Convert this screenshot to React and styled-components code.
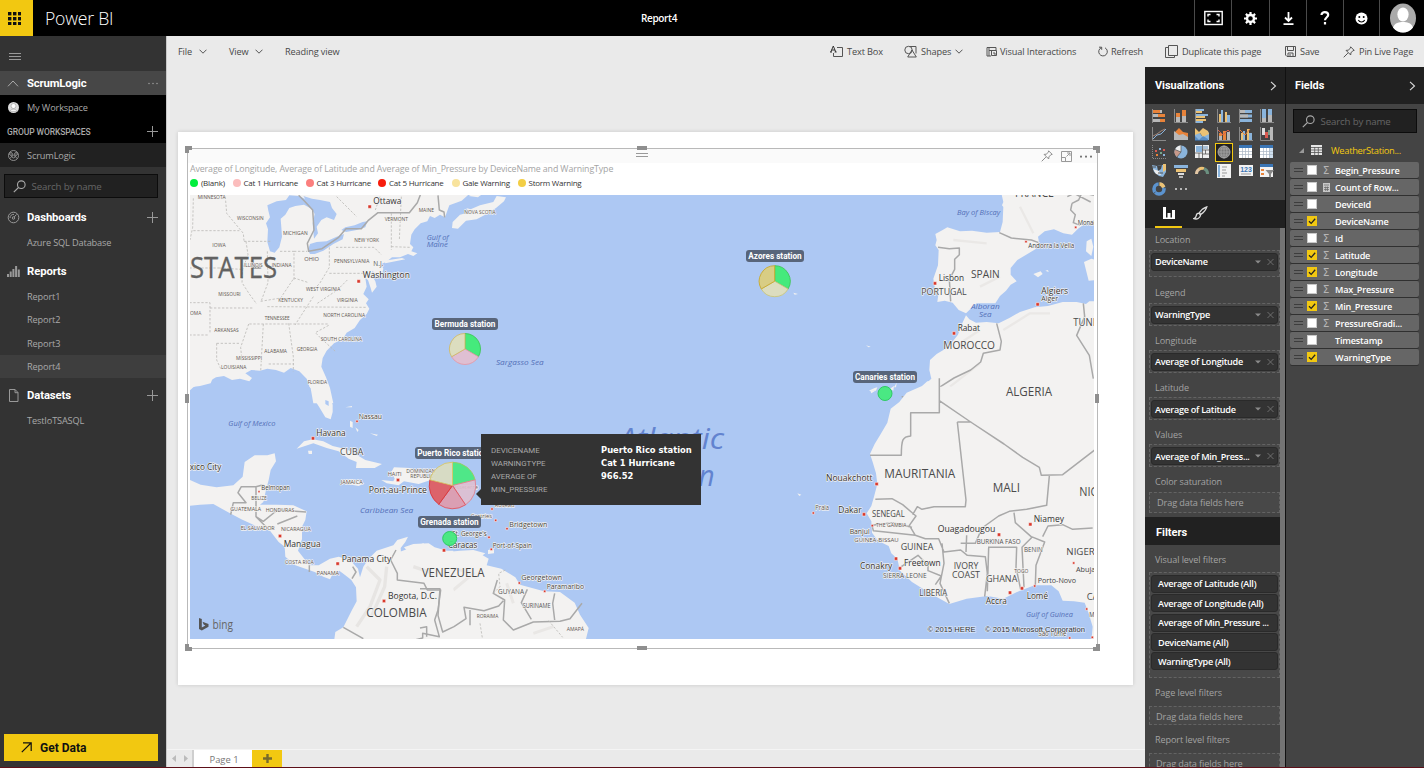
import React from 'react';
import styled, { createGlobalStyle, css } from 'styled-components';

const UI = '"Open Sans", "Noto Sans", sans-serif';
const DIN = 'Roboto, "Open Sans", sans-serif';
const YELLOW = '#f2c811';

const Global = createGlobalStyle`
  * { box-sizing: border-box; }
  body { margin: 0; background: #eaeaea; font-family: ${UI}; overflow: hidden; }
`;

/* ---------- shell ---------- */
const Shell = styled.div`
  width: 1424px; height: 768px; display: flex; flex-direction: column;
  border-bottom: 1px solid #5d1019; overflow: hidden; font-size: 9.5px;
`;
const TopBar = styled.header`
  height: 36px; flex: none; background: #000; display: flex; color: #fff;
`;
const Waffle = styled.div`
  width: 33px; background: ${YELLOW}; display: flex; align-items: center; justify-content: center;
  padding-right: 4px;
`;
const Brand = styled.div`
  width: 567px; padding-left: 12px; font-size: 17.6px; font-weight: 300; line-height: 36px; letter-spacing: -0.2px;
`;
const ReportTitle = styled.div`
  flex: 1; padding-left: 41px; font-size: 10px; line-height: 36px; font-weight: 600; letter-spacing: -0.35px;
`;
const TopButton = styled.div`
  width: ${p => p.$w}px; border-left: 1px solid #4a4a4a; display: flex; align-items: center; justify-content: center;
`;
const Body = styled.div`flex: 1; display: flex; min-height: 0;`;

/* ---------- sidebar ---------- */
const Sidebar = styled.nav`
  width: 166px; background: #333; display: flex; flex-direction: column; flex: none;
`;
const Menu = styled.div`height: 35px; padding: 16px 0 0 9px; svg { display: block; }`;
const SideRow = styled.div`
  height: ${p => p.$h}px; margin-top: ${p => p.$mt || 0}px; background: ${p => p.$bg || 'transparent'};
  display: flex; align-items: center; padding: 0 8px 0 7px; flex: none;
`;
const IconSlot = styled.span`width: 20px; display: flex; align-items: center; svg { display: block; }`;
const SideHead = styled.span`
  flex: 1; color: #fff; font: 700 11.3px ${DIN}; letter-spacing: ${p => p.$ls || 0}px;
`;
const SideText = styled.span`
  flex: 1; color: #a9a9a9; font-size: 9.2px; letter-spacing: -0.14px; white-space: nowrap;
`;
const Caption = styled.span`flex: 1; color: #a9a9a9; font: 500 8.5px ${DIN}; letter-spacing: -0.1px; padding-top: 1px;`;
const SearchBox = styled.div`
  height: 24px; margin: ${p => p.$m}; background: #212121; border: 1px solid #0c0c0c;
  display: flex; align-items: center; gap: 5.5px; padding-left: 8px; color: #666; font-size: 9.7px; letter-spacing: -0.15px; flex: none;
`;
const GetData = styled.div`
  margin: auto 8px 6px 4px; height: 27px; background: ${YELLOW}; color: #111; display: flex; align-items: center;
  gap: 8px; padding-left: 17px; font: 700 12px ${DIN};
`;

/* ---------- editor ---------- */
const Editor = styled.main`
  flex: 1; display: flex; flex-direction: column; border-left: 1px solid #c8c8c8; background: #eaeaea; min-width: 0;
`;
const ToolBar = styled.div`height: 31px; flex: none; display: flex; padding-left: 11px;`;
const ToolItem = styled.div`
  width: ${p => p.$w}px; display: flex; align-items: center; gap: ${p => p.$gap || 4}px; color: #484848;
  font-size: 9.2px; letter-spacing: -0.13px; white-space: nowrap; svg { flex: none; }
`;
const Spacer = styled.div`flex: 1;`;
const Work = styled.div`flex: 1; display: flex; min-height: 0;`;
const CanvasColumn = styled.div`width: 978px; display: flex; flex-direction: column; flex: none;`;
const Page = styled.section`
  margin: 65px 12px 0 11px; height: 553px; background: #fff; box-shadow: 0 0 4px rgba(0,0,0,.15); padding: 16px 35px 0 9px;
  flex: none;
`;
const Visual = styled.div`
  height: 501px; border: 1px solid #b9b9b9; position: relative; padding: 0 0 0 2px;
`;
const Handle = styled.i`
  position: absolute; background: ${p => (p.$corner ? 'transparent' : '#8f8f8f')};
  ${p => p.$css}
`;
const VisualHeader = styled.div`
  height: 14px; margin-left: -2px; background: #fafafa; display: flex; align-items: center; justify-content: flex-end; gap: 8px;
  padding-right: 5px; position: relative;
`;
const Grip = styled.i`
  position: absolute; left: 448px; top: 4px; width: 12px; height: 4px; border: solid #999; border-width: 1px 0;
`;
const VisualTitle = styled.div`
  height: 14px; line-height: 13px; color: #a4a4a4; font-size: 8.8px; letter-spacing: -0.1px; white-space: nowrap;
`;
const Legend = styled.div`height: 18px; display: flex; align-items: flex-start; line-height: 11px;`;
const LegendItem = styled.div`
  width: ${p => p.$w}px; display: flex; align-items: center; gap: 3px; color: #333; font-size: 8px; letter-spacing: -0.24px;
  white-space: nowrap;
  &::before { content: ''; width: 8px; height: 8px; border-radius: 50%; background: ${p => p.$c}; flex: none; }
`;
const MapFrame = styled.div`
  width: 904px; height: 444px; position: relative; overflow: hidden; > svg { display: block; }
`;
const Badge = styled.div`
  position: absolute; left: ${p => p.$x}px; top: ${p => p.$y}px; width: ${p => p.$w}px; height: 12px; border-radius: 3px;
  background: #58657a; color: #fff; font: 700 8.2px/12px ${DIN}; text-align: center; white-space: nowrap;
`;
const Tooltip = styled.div`
  position: absolute; left: 291px; top: 239px; width: 220px; height: 71px; background: #333; color: #a8a8a8;
  display: grid; grid-template-columns: 110px 1fr; padding: 10px 0 0 10px; grid-auto-rows: 13.2px; align-content: start;
  font: 400 7.9px/13px ${DIN};
  &::before {
    content: ''; position: absolute; left: -5px; top: 55px; border: 5px solid transparent; border-left: 0; border-right-color: #333;
  }
`;
const TipValue = styled.b`color: #fff; font: 700 8.4px/13px "DejaVu Sans", ${UI}; white-space: nowrap;`;

const PageTabs = styled.div`
  height: 18px; margin-top: auto; border-top: 1px solid #f4f4f4; display: flex; color: #777;
`;
const TabArrows = styled.div`width: 27px; border-right: 2px solid #cfcfcf; display: flex; align-items: center; justify-content: center; gap: 8px;`;
const PageTab = styled.div`width: 58px; background: #fff; text-align: center; font-size: 9.4px; line-height: 19px; padding-left: 2px;`;
const AddPage = styled.div`width: 30px; background: ${YELLOW}; display: flex; align-items: center; justify-content: center;`;

/* ---------- right panes ---------- */
const Pane = styled.aside`
  background: #444; display: flex; flex-direction: column; width: ${p => p.$w}px; overflow: hidden; flex: none;
  ${p => p.$sep && css`border-right: 1px solid #111;`}
`;
const PaneHead = styled.div`
  height: 37px; background: #212121; color: #fff; display: flex; align-items: center; justify-content: space-between;
  padding: 0 8px 0 ${p => p.$pl || 9}px; font: 700 10.9px ${DIN}; flex: none;
`;
const Gallery = styled.div`
  height: 96px; display: grid; grid-template-columns: repeat(6, 21.7px); grid-auto-rows: 18.4px; padding: 2.400px 0 0 3.200px; flex: none;
`;
const Cell = styled.div`
  display: flex; align-items: center; justify-content: center; outline: ${p => (p.$on ? `1.5px solid ${YELLOW}` : 'none')};
  outline-offset: -1px; background: ${p => (p.$on ? '#222' : 'none')}; margin: ${p => (p.$on ? '0 2px' : '0')};
`;
const Tabs = styled.div`
  height: 28px; background: #212121; display: flex; padding-left: 10px; flex: none;
`;
const Tab = styled.div`
  width: 27px; margin-right: 5px; display: flex; align-items: center; justify-content: center;
  border-bottom: 2px solid ${p => (p.$on ? YELLOW : 'transparent')};
`;
const Wells = styled.div`
  flex: 1; border-right: 5px solid #747474; padding-left: 4px; min-height: 0; overflow: hidden; background: #444;
`;
const WellLabel = styled.div`
  height: ${p => p.$h}px; padding: ${p => p.$pt}px 0 0 6px; color: #a3a3a3; font-size: 9.1px; letter-spacing: -0.1px; line-height: 12px; white-space: nowrap;
`;
const Well = styled.div`
  height: ${p => p.$h}px; border: 1px dashed #636363; background: #484848; padding: 2px 1px 0 1px; display: flex;
  flex-direction: column; gap: 1.4px;
`;
const Chip = styled.div`
  height: 18px; flex: none; background: #333; border: 1px solid #2a2a2a; border-radius: 3px; color: #fff; display: flex;
  align-items: center; padding: 0 3px 0 ${p => p.$pl || 3}px; font-size: 9.1px; font-weight: 600; letter-spacing: -0.27px; white-space: nowrap;
  span { flex: 1; } svg { flex: none; }
`;
const Drop = styled.div`color: #a3a3a3; font-size: 9.2px; letter-spacing: -0.13px; line-height: 15px; padding-left: ${p => p.$pl}px; white-space: nowrap;`;
const FilterHead = styled.div`
  height: 28px; margin: 4px -5px 0 -4px; background: #212121; border-right: 5px solid #636363; color: #fff; font: 700 11px/31px ${DIN};
  padding-left: 11px;
`;
const TableRow = styled.div`
  height: 16px; margin-top: 9px; display: flex; align-items: center; color: #f2c811; padding-left: 13px; font-size: 9.4px; letter-spacing: -0.33px;
  svg:nth-child(2) { margin: 0 9px 0 7px; }
`;
const FieldList = styled.div`display: flex; flex-direction: column; gap: 1px; padding: 4px 5px 0 4px;`;
const FieldRow = styled.div`
  height: 16px; background: #666; border-radius: 2px; box-shadow: 0 1px 0 #303030; display: flex; align-items: center; color: #fff; padding-left: 4px;
  font-size: 9.1px; font-weight: 600; letter-spacing: -0.18px;
`;
const DragGrip = styled.i`width: 9px; height: 4px; border: solid #3d3d3d; border-width: 1px 0; margin-right: 4px;`;
const Check = styled.i`
  width: 10px; height: 10px; background: ${p => (p.$on ? YELLOW : '#fff')}; border: 1px solid ${p => (p.$on ? YELLOW : '#c9c9c9')}; display: flex;
`;
const Kind = styled.i`width: 18px; display: flex; justify-content: center; color: #b5b5b5; font: 400 10.5px "DejaVu Sans", sans-serif;`;

/* ---------- icons ---------- */
const Svg = ({ w = 12, h = w, vb = `0 0 ${w} ${h}`, s = 'none', f = 'none', sw = 1, children }) => (
  <svg width={w} height={h} viewBox={vb} fill={f} stroke={s} strokeWidth={sw}>{children}</svg>
);
const Chevron = () => <Svg w={8} h={5} s="#555"><path d="M.5 .7 4 4.2 7.5 .7" /></Svg>;
const ChevRight = () => <Svg w={7} h={10} s="#ddd" sw={1.1}><path d="M1 .8 5.5 5 1 9.2" /></Svg>;
const Plus = () => <Svg w={11} s="#999"><path d="M5.5 0v11M0 5.5h11" /></Svg>;
const Magnifier = () => (
  <Svg w={13} s="#aaa" sw={1.1}><circle cx="8.3" cy="4.7" r="3.8" /><path d="M5.5 7.5.8 12.2" /></Svg>
);
const Pin = ({ c = '#555', w = 12 }) => (
  <Svg w={w} vb="0 0 12 12" s={c} sw={1}><path d="M7.6.8l3.6 3.6-1.3.3-2 2.2-.2 2.100-4.600-4.600 2.100-.2 2.200-2zM4.900 7.100.7 11.300" /></Svg>
);
const O = '#e8833a', B = '#8ab4dc', Y = '#ecc274', G = '#b9b9b9', DB = '#3a75b5', AX = '#8a8a8a';
const R = (x, y, w, h, c) => <rect x={x} y={y} width={w} height={h} fill={c} key={`${x}-${y}-${w}-${h}-${c}`} stroke="none" />;
const Viz = ({ children }) => <Svg w={14}>{children}</Svg>;
const axisV = <path d="M.5 0v14" stroke={AX} />;
const axisL = <path d="M.5 0v13.5H14" stroke={AX} />;
const tableIcon = (last) => (
  <>{R(0, 0, 13, 13, '#fff')}{R(0, 0, 13, 3, DB)}{last ? R(9, 3, 4, 10, '#cfe0ef') : null}
    <path d="M3.5 3v10M6.5 3v10M9.5 3v10M0 6.500h13M0 9.500h13" stroke="#a9b6c4" strokeWidth=".7" /></>
);
const VIZ = [
  <>{axisV}{R(1, 1, 7, 3, O)}{R(8, 1, 2, 3, G)}{R(1, 5, 5, 3, G)}{R(6, 5, 7, 3, O)}{R(1, 10, 7, 3, G)}{R(8, 10, 5, 3, O)}</>,
  <>{axisL}{R(2, 8, 4, 5, G)}{R(2, 4, 4, 4, O)}{R(8, 7, 4, 6, G)}{R(8, 1, 4, 6, O)}</>,
  <>{axisV}{R(1, 0, 8, 2, B)}{R(1, 2, 6, 2, Y)}{R(1, 5, 12, 2, B)}{R(1, 7, 9, 2, Y)}{R(1, 10, 10, 2, Y)}{R(1, 12, 7, 2, B)}</>,
  <>{axisL}{R(2, 5, 2, 8, Y)}{R(4, 1, 2, 12, B)}{R(8, 3, 2, 10, Y)}{R(10, 6, 3, 7, B)}</>,
  <>{axisV}{R(1, 1, 12, 3, B)}{R(1, 1, 5, 3, G)}{R(1, 5.500, 12, 3, B)}{R(1, 5.500, 8, 3, G)}{R(1, 10, 12, 3, B)}</>,
  <>{axisL}{R(2, 0, 4, 9, B)}{R(2, 9, 4, 4, G)}{R(8, 0, 4, 6, B)}{R(8, 6, 4, 7, G)}</>,
  <>{axisL}<path d="M1 12 5 8l4-1 5-5" stroke={B} /><path d="M1 9l4-2 4-3 4-2" stroke="#a3867a" /></>,
  <><path d="M0 13V6l5-5 4 4 5 1v7z" fill={O} /><path d="M0 13V4l5 4 4-1 5 3v3z" fill={G} /></>,
  <><path d="M0 13V7l4-2 3 4 5-5 2 2v7z" fill={B} /><path d="M0 1l4 4 4-4 5 3 1 3-6 3-3-4-5 2z" fill={Y} /><path d="M0 9l4 4 4-4 5 3v2H0z" fill={DB} opacity=".6" /></>,
  <>{axisL}{R(2, 6, 3, 7, G)}{R(6, 4, 3, 9, O)}{R(10, 5, 3, 8, G)}{R(2, 6, 3, 3, O)}<path d="M1 3l5 5 5-5 2 2" stroke="#d2604a" /></>,
  <>{axisL}{R(2, 6, 2, 7, Y)}{R(4, 4, 2, 9, B)}{R(8, 2, 2, 11, Y)}{R(10, 6, 3, 7, B)}<path d="M1 3l5 5 5-6" stroke={O} /></>,
  <>{axisL}{R(2, 1, 3, 7, '#ddd')}{R(5, 5, 3, 6, '#d8594f')}{R(8, 3, 2, 5, '#7a9c8a')}{R(10, 0, 3, 13, '#b9b9b9')}</>,
  <><path d="M.5 0v13.5H14" stroke={AX} strokeDasharray="1 1" />{R(3, 5, 2, 2, '#d8594f')}{R(7, 3, 2, 2, B)}{R(8, 7, 2, 2, '#76a68b')}{R(4, 9, 2, 2, O)}{R(11, 9, 2, 2, B)}{R(11, 4, 2, 2, '#d8594f')}</>,
  <><circle cx="7" cy="7" r="6.500" fill={B} /><path d="M7 7V.5A6.500 6.500 0 0 0 1 5z" fill="#eee" /><path d="M7 7 1 4.500A6.500 6.500 0 0 0 3 12z" fill="#c7998a" /><path d="M7 7V.5M7 7 1 4.500M7 7l-4 5" stroke="#555" strokeWidth=".7" /></>,
  <>{R(0, 0, 14, 13, '#eee')}{R(1, 1, 6, 6, B)}{R(8, 1, 5, 3, '#a9bfd4')}<path d="M7.500 0v13M0 8h7M7 5h7M10.500 5v4M7 9h7M4 8v5" stroke="#555" strokeWidth=".8" /></>,
  <><circle cx="7" cy="7" r="6" fill="#777" stroke="#a5a5a5" /><ellipse cx="7" cy="7" rx="3" ry="6" stroke="#aaa" strokeWidth=".7" /><path d="M1 7h12M7 1v12M2 4h10M2 10h10" stroke="#aaa" strokeWidth=".7" /></>,
  tableIcon(false),
  tableIcon(true),
  <><path d="M0 1l5 1 4-1 5 0v7l-3 5-4-1-5-4z" fill={B} /><path d="M5 2l5-1-1 4-3 2z" fill="#444" /><path d="M11 0l3 0v6l-3 2z" fill={Y} /><path d="M1 5l6 2 2 4-5-1z" fill="#eee" /><path d="M0 3h4M6 9h5" stroke="#555" /></>,
  <>{R(0, 1, 14, 3, B)}{R(2, 5, 10, 3, Y)}{R(4, 9, 6, 2, '#ddd')}{R(5, 12, 4, 2, G)}</>,
  <><path d="M1.500 10a5.500 5.500 0 0 1 3-5" stroke="#e2c7a5" strokeWidth="3" /><path d="M4 5.200a5.500 5.500 0 0 1 5-.6" stroke={Y} strokeWidth="3" /><path d="M9 4.600a5.500 5.500 0 0 1 3.500 5.400" stroke="#6b9080" strokeWidth="3" /></>,
  <>{R(0, 0, 14, 14, '#f2f2f2')}{R(1, 1, 2, 12, B)}<path d="M5 3h5M5 6h4M5 9h5M5 12h3" stroke="#999" /></>,
  <>{R(0, 1, 14, 11, '#f2f2f2')}<text x="7" y="7.500" fontSize="7" fontWeight="700" fontFamily="Liberation Sans" textAnchor="middle" fill={DB}>123</text><path d="M2 10h10" stroke="#999" /></>,
  <>{R(0, 0, 13, 13, '#f2f2f2')}{R(0, 0, 13, 3, DB)}{R(1, 5, 3, 2, O)}{R(1, 9, 3, 2, O)}<path d="M5.500 6H14l-3 4v4l-2-1.500V10z" fill="#888" /></>,
  <><circle cx="7" cy="7" r="5" stroke="#5b93cf" strokeWidth="3.600" /><path d="M7 2a5 5 0 0 1 4.700 3.300" stroke={Y} strokeWidth="3.600" /><path d="M7 0v4M12 6l2-1M3.500 10 1 12" stroke="#444" strokeWidth=".8" /></>,
  <><circle cx="2" cy="7" r="1" fill="#ddd" /><circle cx="7" cy="7" r="1" fill="#ddd" /><circle cx="12" cy="7" r="1" fill="#ddd" /></>,
];

/* ---------- map ---------- */
const LAND = '#f3f2f1';
const WATER = '#adc8f3';

const Pie = ({ cx, cy, r, slices }) => {
  let a = 0;
  const pt = d => `${cx + r * Math.sin((d * Math.PI) / 180)} ${cy - r * Math.cos((d * Math.PI) / 180)}`;
  return slices.map(([deg, fill, stroke]) => {
    const d = `M${cx} ${cy}L${pt(a)}A${r} ${r} 0 0 1 ${pt(a + deg)}Z`;
    a += deg;
    return <path key={a} d={d} fill={fill} stroke={stroke} strokeWidth=".9" />;
  });
};

const KIND = {
  state: { fontSize: 18, fill: '#5f5650' },
  small: { fontSize: 20, fill: '#555' },
  country: { fontSize: 26, fill: '#4a4a4a' },
  large: { fontSize: 31, fill: '#4a4a4a' },
  nation: { fontSize: 36, fill: '#4a4a4a' },
  town: { fontSize: 22, fill: '#444' },
  city: { fontSize: 26.5, fill: '#333' },
  sea: { fontSize: 22, fill: '#5470b8', fontStyle: 'italic', stroke: 'none' },
};
/* Each region is laid out on a grid three times finer than the screen. */
const Grid3 = ({ at: [x, y], children }) => (
  <g transform={`translate(${x} ${y}) scale(.33333)`} strokeLinejoin="round">{children}</g>
);
const Labels = ({ at, labels, dots }) => (
  <Grid3 at={at}>
    {dots.map(([dx, dy, s = 10]) => <rect key={`${dx}-${dy}`} x={dx - s / 2} y={dy - s / 2} width={s} height={s} fill="#d8392c" stroke="#fff" strokeWidth="1.500" />)}
    <g stroke={LAND} strokeWidth="4" paintOrder="stroke" fontFamily={'"Open Sans", "Noto Sans", sans-serif'}>
      {labels.map(([t, k, lx, ly, len]) => (
        <text key={t + lx} x={lx} y={ly} textLength={len} lengthAdjust="spacingAndGlyphs" {...KIND[k]}>{t}</text>
      ))}
    </g>
  </Grid3>
);
const border = { fill: 'none', stroke: '#a9a9a9', strokeWidth: 4.500 };
const dashed = { fill: 'none', stroke: '#bcbab7', strokeWidth: 2.500, strokeDasharray: '7 5' };

const ORIGIN = { north: [180, 140], carib: [180, 380], south: [420, 380], europe: [720, 140], africa: [790, 380] };
const LABELS = {
  north: [
    ['MINNESOTA', 'state', 53, 176, 84], ['WISCONSIN', 'state', 171, 239, 80], ['MICHIGAN', 'state', 309, 284, 74],
    ['Ottawa', 'city', 580, 192, 84], ['MAINE', 'state', 716, 217, 46], ['VERMONT', 'state', 614, 243, 70],
    ['NOVA SCOTIA', 'state', 853, 221, 94], ['IOWA', 'state', 97, 320, 40], ['NEW YORK', 'state', 523, 306, 74],
    ['OHIO', 'state', 373, 364, 44], ['ILLINOIS', 'state', 192, 382, 56], ['INDIANA', 'state', 275, 382, 60],
    ['PENNSYLVANIA', 'state', 462, 369, 106], ['N.J.', 'small', 580, 379, 30], ['Washington', 'city', 548, 415, 142],
    ['WEST VIRGINIA', 'state', 378, 454, 103], ['KENTUCKY', 'state', 295, 486, 74], ['VIRGINIA', 'state', 471, 485, 62],
    ['MISSOURI', 'state', 115, 467, 67], ['OMA', 'state', 30, 526, 34], ['TENNESSEE', 'state', 254, 539, 75],
    ['NORTH CAROLINA', 'state', 430, 530, 125], ['ARKANSAS', 'state', 103, 575, 73], ['SOUTH CAROLINA', 'state', 422, 602, 124],
    ['ALABAMA', 'state', 253, 638, 68], ['GEORGIA', 'state', 350, 634, 62], ['MISSISSIPPI', 'state', 168, 660, 78],
    ['LOUISIANA', 'state', 123, 687, 76], ['FLORIDA', 'state', 383, 731, 58],
    ['Gulf of', 'sea', 740, 299, 66], ['Maine', 'sea', 740, 320, 64], ['Sargasso Sea', 'sea', 948, 675, 143],
  ],
  carib: [
    ['Gulf of Mexico', 'sea', 145, 138, 141], ['Nassau', 'town', 536, 118, 70], ['Havana', 'city', 409, 169, 88],
    ['CUBA', 'country', 480, 226, 70], ['xico City', 'city', 29, 269, 95], ['Belmopan', 'town', 244, 329, 86],
    ['BELIZE', 'state', 214, 360, 46], ['GUATEMALA', 'state', 151, 392, 92], ['HONDURAS', 'state', 257, 396, 86],
    ['EL SALVADOR', 'state', 182, 449, 102], ['NICARAGUA', 'state', 303, 454, 90], ['Managua', 'city', 311, 500, 111],
    ['COSTA RICA', 'state', 315, 552, 86], ['PANAMA', 'state', 410, 584, 67], ['Panama City', 'city', 485, 546, 149],
    ['Bogota, D.C.', 'city', 624, 657, 147], ['COLOMBIA', 'nation', 559, 711, 181], ['JAMAICA', 'state', 482, 311, 66],
    ['HAITI', 'state', 623, 288, 42], ['DOMINICAN', 'state', 679, 279, 88], ['REPUBLIC', 'state', 691, 295, 70], ['Port-au-Prince', 'city', 566, 339, 175],
    ['Caribbean Sea', 'sea', 540, 398, 160],
  ],
  south: [
    ['Basseterre', 'state', 88, 328, 86], ['Roseau', 'state', 224, 381, 60], ['Castries', 'state', 152, 413, 64],
    ['Bridgetown', 'town', 268, 440, 114], ["St. George's", 'town', 96, 467, 104], ['Caracas', 'city', 84, 505, 88],
    ['Port-of-Spain', 'town', 218, 503, 118], ['VENEZUELA', 'nation', 5, 590, 189], ['Georgetown', 'town', 304, 601, 122],
    ['Paramaribo', 'town', 380, 628, 112], ['GUYANA', 'small', 234, 641, 78], ['SURINAME', 'small', 308, 684, 84],
    ['RORAIMA', 'state', 170, 713, 65], ['AMAPÁ', 'state', 440, 753, 52],
  ],
  europe: [
    ['FRANCE', 'nation', 885, 172, 117], ['Bay of Biscay', 'sea', 711, 226, 130], ['Monaco', 'town', 1073, 255, 66],
    ['Andorra la Vella', 'town', 925, 325, 138], ['SPAIN', 'large', 753, 413, 86], ['Lisbon', 'city', 656, 424, 76],
    ['PORTUGAL', 'country', 604, 464, 136], ['Alboran', 'sea', 753, 506, 86], ['Sea', 'sea', 777, 532, 38],
    ['Algiers', 'city', 964, 461, 80], ['Alger', 'town', 964, 482, 50], ['Rabat', 'city', 713, 572, 67],
    ['TUNISIA', 'large', 1060, 557, 108], ['MOROCCO', 'large', 670, 628, 155], ['ALGERIA', 'nation', 858, 768, 138],
  ],
  africa: [
    ['Nouakchott', 'city', 108, 304, 140], ['MAURITANIA', 'nation', 283, 295, 213], ['MALI', 'nation', 608, 335, 82],
    ['NIGER', 'nation', 868, 348, 96], ['Praia', 'small', 76, 390, 41], ['Dakar', 'city', 145, 398, 70], ['SENEGAL', 'country', 246, 411, 98],
    ['THE GAMBIA', 'state', 258, 441, 92], ['Banjul', 'town', 179, 462, 60], ['GUINEA-BISSAU', 'state', 193, 485, 133],
    ['GUINEA', 'country', 332, 509, 98], ['Conakry', 'city', 210, 568, 97], ['Freetown', 'city', 342, 559, 110],
    ['SIERRA LEONE', 'small', 279, 594, 131], ['LIBERIA', 'country', 388, 648, 84], ['IVORY', 'country', 491, 567, 74],
    ['COAST', 'country', 486, 594, 84], ['Ouagadougou', 'city', 443, 456, 173], ['BURKINA FASO', 'small', 560, 493, 132],
    ['BENIN', 'small', 702, 516, 56], ['Niamey', 'city', 731, 425, 91], ['TOGO', 'state', 673, 579, 42], ['GHANA', 'country', 588, 607, 94],
    ['Accra', 'city', 587, 671, 64], ['Lomé', 'city', 710, 658, 64], ['Porto-Novo', 'town', 743, 610, 115], ['NIGERIA', 'country', 829, 524, 112],
    ['Abuja', 'town', 858, 575, 58], ['CAM', 'country', 890, 661, 60], ['Gulf of Guinea', 'sea', 708, 711, 141], ['Malabo', 'town', 898, 712, 60],
    ['São Tomé', 'town', 745, 767, 84],
  ],
};
const DOTS = {
  north: [[569, 200], [536, 424]],
  carib: [[531, 124, 7], [399, 175], [237, 335, 6], [300, 468], [473, 551], [612, 663], [654, 300], [792, 511]],
  south: [[216, 387, 7], [227, 421, 7], [261, 446, 7], [207, 472, 7], [214, 508, 7], [298, 609, 7], [374, 634, 7]],
  europe: [[1067, 262, 7], [918, 305, 7], [645, 430], [953, 493], [702, 580]],
  africa: [[260, 312], [70, 399, 7], [222, 403], [247, 437, 7], [318, 536], [330, 565], [627, 464], [721, 433], [851, 549, 7], [660, 638], [696, 625], [734, 618, 7], [890, 687, 7], [839, 774, 7], [907, 772, 7]],
};

const WorldMap = () => (
  <svg width="904" height="444" viewBox="190 195 904 444">
    <rect x="190" y="195" width="904" height="444" fill={WATER} />
    <Grid3 at={ORIGIN.north}>
      <path fill={LAND} d="M20 150H905L902 166 870 160 845 182 808 196 795 232 780 224 764 234 750 228 742 244 722 250 704 268 694 284 690 312 700 322 694 334 712 340 700 348 684 342 660 352 636 352 618 366 604 372 610 386 604 412 590 408 578 392 574 404 586 424 590 440 576 458 572 444 564 420 556 414 560 440 550 462 566 478 558 490 568 506 560 522 540 540 524 564 500 578 488 598 462 610 440 632 428 654 424 680 438 712 450 744 460 790H400L392 745 380 716 358 694 332 684 312 698 288 690 262 686 240 692 214 690 196 700 216 714 208 724 180 716 156 720 132 708 108 712 80 728 56 732 40 742 20 760Z" />
      <path fill={LAND} d="M978 172 950 168 940 186 900 196 872 208 858 204 872 216 840 224 818 246 816 264 834 266 858 242 890 238 920 222 948 204 972 184ZM866 168l24-12 14 8-10 8zM612 362l54-8 10 4-60 12z" />
      <path fill={WATER} d="M265 212 262 196 290 184 318 180 328 166 356 168 388 182 402 200 390 204 372 194 346 198 328 204 316 224 302 236 304 262 306 290 298 322 284 338 270 334 262 306 264 268 258 250 270 232ZM370 168 396 176 420 180 450 186 456 204 470 222 462 240 440 232 424 240 410 260 414 280 402 296 398 250 404 222 388 196ZM384 330 390 312 410 306 440 304 470 290 492 282 488 298 460 312 430 332 404 342 390 342ZM484 270 496 262 524 256 548 246 562 244 556 262 530 270 498 276Z" />
      <g {...dashed}>
        <path d="M40 175 38 262 30 300M136 170l4 50 50 60 2 22M40 272h138M192 304h80M198 304l6 40-16 44-2 40 22 34 22 30M262 334l2 94-20 54M300 334l42 0 0 88M342 334l40 0M448 322v60l-30 50-24 20M448 400h130M468 322h114l22 22M634 220v110M664 170l-6 130M634 320l56 2M28 488h62v92M90 504h128M262 500l300 2M208 552h240M326 550l14 100v44M110 610h72M110 610v50l14 30M206 552l-24 70 4 40M250 552l-8 142M266 672h76M28 384l90 0M118 384l66 4M446 556l-40 22 20 20 40 36M242 484l60-10 40-60 44 14M400 470 345 555M28 585h60M412 490l60-40 30-30M600 170l-14 40M470 170l60 60" />
      </g>
      <path {...border} d="M356 166l20 20 22 24 4 60-20 40 4 24 40-8 50-34 22-26h46l20-24 30-24h94l24-30 10-26M774 166l4 44 14 6 2 16" />
    </Grid3>
    <Grid3 at={ORIGIN.south}>
      <path fill={LAND} d="M-60 515 10 490 34 510 80 516 120 512 160 510 196 520 188 526 206 536 200 556 244 566 286 592 300 614 372 634 420 636 464 668 480 704 506 744 496 785H-60ZM204 510l18-2 0 12-18 2z" />
      <path d="M40 550l120 30-60 50M260 610l20 60M340 760l60-20" stroke="#e9e7e5" strokeWidth="9" fill="none" />
    </Grid3>
    <Grid3 at={ORIGIN.carib}>
      <path fill={LAND} d="M384 -10 388 20 400 30 404 60 418 82 436 112 452 118 458 96 458 74 446 44 436 -10ZM28 -10 100 -10 92 10 60 18 28 22ZM20 282 30 300 62 314 110 322 160 316 188 290 194 246 224 226 262 226 284 220 288 244 272 270 266 300 258 330 250 366 240 374 290 374 340 376 380 394 376 420 366 440 366 478 354 512 368 530 388 556 416 556 450 536 476 530 510 540 534 566 540 592 550 560 566 536 590 512 640 496 652 480 684 470 676 486 662 504 664 536 680 552 692 544 688 520 672 502 700 492 746 490 764 502 800 512 820 512V785H462L466 756 490 742 516 690 530 664 528 622 514 600 496 586 478 572 458 582 450 598 430 590 404 576 376 566 346 556 316 530 314 500 296 486 270 452 232 440 184 418 150 400 100 372 60 374 20 378Z" />
      <path fill={LAND} d="M350 206 372 184 398 178 430 184 458 198 500 208 530 224 556 240 606 252 584 264 528 264 530 246 506 236 476 214 440 204 400 190ZM604 300 640 304 644 296 634 276 642 262 690 264 740 280 752 300 716 312 672 304 656 316 620 310ZM484 300l34-2 36 12-18 8-34-6zM384 212l12 0 0 10-10 0zM510 122l8 4 0 18-8-4zM526 142l10 8-4 6zM570 160l24 4-4 4zM496 82l20-4 0 4z" />
      <path fill={WATER} d="M436 60l10 4 0 14-10-6z" />
      <path d="M560 560l40 40-30 80-40 60M620 560l-6 60-40 90M700 560l60 20" stroke="#e7e5e3" strokeWidth="10" fill="none" />
      <path {...border} d="M228 320h-44l-10 18 24 30-38 0-8 36M228 320l22-6M228 320v90l22 14 42-34 86 6M292 432l60-24M388 556v20M518 560l10 16-12 20M648 510l-16 30 20 40 0 20 80 10 10 20 40 0-8 60-10 30 14 50-50-10 0 14-40 10M490 742l60 34M228 410l30 30" />
    </Grid3>
    <Grid3 at={ORIGIN.south}>
      <path {...border} d="M0 626l60 0-6 80 14 50 34-16 36-24-6-34 60 10 44-14 14-16M0 744l20-4 0 30M232 600l-12 40 34 20-4 60 30 30 60-24 80-2 30-8 36-46M322 628l-18 40 30 50M404 640l-6 30 6 50M150 690l0 46" />
      <path {...dashed} d="M180 730l8 50M386 722l42 50M256 570l-20 10 4 40-20 20" />
    </Grid3>
    <Grid3 at={ORIGIN.europe}>
      <path fill={LAND} d="M842 150 850 186 846 196 862 216 850 200 848 246 840 276 800 278 756 272 720 274 682 262 668 270 646 282 650 300 646 316 656 330 654 376 640 416 644 440 656 456 652 486 674 482 698 488 716 510 738 520 752 506 770 490 826 490 840 468 858 452 872 434 890 424 872 404 872 384 892 360 916 346 946 328 958 312 954 290 974 274 1002 268 1030 280 1056 284 1074 266 1094 252 1130 238V150ZM738 526 724 556 714 584 684 622 650 642 630 660 628 690 634 716 606 742 566 762 540 785H1130V484L1108 484 1098 492 1070 486 1028 486 984 498 944 502 900 516 868 534 836 550 800 546 768 548 748 538ZM1100 304l14-8 6 24-6 28-16-14zM1092 366l22-10 12 4v60l-20 2-6-24zM940 402l22-8 6 8-14 10zM976 392l8-2 2 6zM438 616l14 4-6 2zM220 458l14 4-10 2zM446 752l18-8 8-2-4 10zM500 760l12-6zM522 742l8-14-2 14z" />
      <path d="M720 610l60-40M850 570l80-50 60 0M690 740l90-70M700 300l100 10M780 440l60-30M900 200l40 80" stroke="#eae8e6" strokeWidth="7" fill="none" />
      <path {...border} d="M838 278l36 16 60 6 22 8M654 322l34 4 30-2 0 20-14 14 0 30-16 30 4 66M1056 190l-4 20 14 14-6 24 20 8M1056 190l20-10 10-22 36 8M1042 170l20-10 50 26M830 550l14 54-4 26-50 10-8 26-30 24-50 24-44 28v60M1090 490l4 40-24 56 38 60 12 70" />
      <path d="M545 770h112" {...border} strokeDasharray="5 5" />
    </Grid3>
    <Grid3 at={ORIGIN.africa}>
      <path fill={LAND} d="M440 4 412 4 396 18 350 38 328 66 302 86 292 128 270 166 254 192 240 222 248 246 258 280 262 312 252 350 244 378 230 400 244 424 246 458 264 482 296 498 304 520 322 536 330 572 366 606 420 640 478 672 530 656 592 648 640 656 690 632 734 616 784 616 806 634 818 662 852 664 884 668 896 700 908 740 904 785H930V20H450ZM240 30l16 2-12 8zM300 26l12-8-2 14zM22 340l12 4-6 4zM60 352l8-4zM90 370l6 2z" />
      <g {...border}>
        <path d="M448 -5V98h-86v70c-24 2-28 10-28 58H240M448 62l94 64 100 66 56 40 50 30 6 24 64-2 96-74M502 126h42M502 126l26 234-2 20H432l-36 8-14-8-14 24M256 358l50-2 32 18 40 34-20 28 18 30-90-10-36-4-4-16 60-8 60 14M778 288l-8 88-60 12-52 6-32 14-50 36-20 46-44 0M376 466l30 10 40 0 16 40 50-6 20 16 54 4 6 50-8 70M456 490l6 60-12 60 28 60M594 502l86 0-2 60 14 66M334 560l50-34 30 30 0 16 40 16-18 26M672 398l4 30 50 44-30 30 6 120M724 470l40 16-26 70-2 60M758 470l16-32 44-4 30 14 60-4M596 504l-4 130M530 466l-2 50" />
      </g>
    </Grid3>
    <g fontFamily="Open Sans, sans-serif">
      <text x="190" y="278.300" fontSize="30" textLength="87" lengthAdjust="spacingAndGlyphs" fill="#626262" stroke="#626262" strokeWidth=".35">STATES</text>
      <g fontSize="28.500" fontStyle="italic" fill="#6283cf">
        <text x="619" y="448.800" textLength="105" lengthAdjust="spacingAndGlyphs">Atlantic</text>
        <text x="636" y="486" textLength="78.500" lengthAdjust="spacingAndGlyphs">Ocean</text>
      </g>
    </g>
    {Object.keys(ORIGIN).map(k => <Labels key={k} at={ORIGIN[k]} labels={LABELS[k]} dots={DOTS[k]} />)}
    <Pie cx={774.700} cy={281.200} r={15.500} slices={[[120, '#45ea7c', '#3fc556'], [120, '#dcddbf', '#c9c67c'], [120, '#d8cd84', '#c9a92c']]} />
    <Pie cx={465} cy={349} r={15.500} slices={[[120, '#45ea7c', '#3fc556'], [120, '#dfbfd2', '#e39aa8'], [120, '#dcddbf', '#d0bb6a']]} />
    <g fillOpacity=".9">
      <Pie cx={452.500} cy={485.500} r={23.300} slices={[[76, '#45ea7c', '#9bc95e'], [70, '#dfbfd0', '#df8391'], [70, '#e09aac', '#df5560'], [68, '#e1585b', '#d8363a'], [76, '#dcddbf', '#d6c66a']]} />
    </g>
    {[[885, 393.500], [449.700, 538.500]].map(([x, y]) => <circle key={x} cx={x} cy={y} r="7" fill="#45ea7c" fillOpacity=".95" stroke="#2fc964" />)}
    <path fill="#555" d="M199 618l2.800 1v8.400l3.600-2-1.800-.9-1.100-2.700 6 2.100v2.900l-6.700 3.800-2.800-1.700z" />
    <text x="212.500" y="629" fontSize="13" textLength="20.500" lengthAdjust="spacingAndGlyphs" fontFamily="Open Sans, sans-serif" fill="#666">bing</text>
    <g fontSize="8" fontFamily="Liberation Sans, sans-serif" fill="#333" stroke="#fff" strokeOpacity=".5" strokeWidth="1.500" paintOrder="stroke">
      <text x="927.500" y="632.300" textLength="48" lengthAdjust="spacingAndGlyphs">© 2015 HERE</text>
      <text x="985" y="632.300" textLength="100" lengthAdjust="spacingAndGlyphs">© 2015 Microsoft Corporation</text>
    </g>
  </svg>
);

/* ---------- data ---------- */
const LEGEND = [['(Blank)', '#01ee3d', 42.500], ['Cat 1 Hurricane', '#fbbdbd', 73], ['Cat 3 Hurricane', '#fb7f7e', 72.500], ['Cat 5 Hurricane', '#f71c0c', 73.500], ['Gale Warning', '#f8e39d', 66], ['Storm Warning', '#f3ce45', 70]];
const WELLS = [
  ['Location', 'DeviceName', 21.500, 5.500, 27], ['Legend', 'WarningType', 26, 10, 23], ['Longitude', 'Average of Longitude', 24.300, 9, 23],
  ['Latitude', 'Average of Latitude', 24.300, 9, 23], ['Values', 'Average of Min_Press...', 24.300, 9, 23],
];
const FILTERS = ['Average of Latitude (All)', 'Average of Longitude (All)', 'Average of Min_Pressure ...', 'DeviceName (All)', 'WarningType (All)'];
const FIELDS = [['Begin_Pressure', 0, 's'], ['Count of Row...', 0, 'c'], ['DeviceId', 0], ['DeviceName', 1], ['Id', 0, 's'], ['Latitude', 1, 's'], ['Longitude', 1, 's'], ['Max_Pressure', 0, 's'], ['Min_Pressure', 1, 's'], ['PressureGradi...', 0, 's'], ['Timestamp', 0], ['WarningType', 1]];
const corner = (v, h) => `${v}: -3px; ${h}: -3px; width: 7px; height: 7px; border: solid #8f8f8f; border-width: ${v === 'top' ? '4px' : '0'} ${h === 'right' ? '4px' : '0'} ${v === 'bottom' ? '4px' : '0'} ${h === 'left' ? '4px' : '0'};`;
const HANDLES = [
  [corner('top', 'left'), 1], [corner('top', 'right'), 1], [corner('bottom', 'left'), 1], [corner('bottom', 'right'), 1],
  ['top: -3px; left: 449px; width: 10px; height: 4px;'], ['bottom: -2px; left: 449px; width: 10px; height: 4px;'],
  ['left: -3px; top: 245px; width: 4px; height: 9px;'], ['right: -2px; top: 245px; width: 4px; height: 9px;'],
];

export default function App() {
  return (
    <Shell>
      <Global />
      <TopBar>
        <Waffle><Svg w={13} f="#111">{[0, 5, 10].flatMap(y => [0, 5, 10].map(x => <rect key={`${x}${y}`} x={x} y={y} width="3.400" height="3.400" />))}</Svg></Waffle>
        <Brand>Power BI</Brand>
        <ReportTitle>Report4</ReportTitle>
        <TopButton $w={37}><Svg w={19} h={16} s="#fff" sw={1.400}><rect x=".8" y="1.500" width="17.400" height="13" /><path d="M4 6.500V4.500h2.500M12.500 4.500H15v2M15 9.500v2h-2.500M6.500 11.500H4v-2" /></Svg></TopButton>
        <TopButton $w={38}><Svg w={13} s="#fff"><circle cx="6.500" cy="6.500" r="3.500" strokeWidth="2.400" /><path d="M6.500 0v2.500M6.500 10.500V13M0 6.500h2.500M10.500 6.500H13M1.900 1.900l1.800 1.800M9.300 9.300l1.800 1.800M1.900 11.100l1.800-1.800M9.300 3.700l1.800-1.800" strokeWidth="2.200" /></Svg></TopButton>
        <TopButton $w={37}><Svg w={11} h={13} s="#fff" sw={1.800}><path d="M5.500 0v9M2 5.500 5.500 9 9 5.500M.5 12.100h10" /></Svg></TopButton>
        <TopButton $w={37}><Svg w={10} h={14} s="#fff" sw={2.200}><path d="M1.500 4C1.500 2 3 1.200 4.800 1.200S8.200 2.200 8.200 4C8.200 6.200 5 6.400 5 9.300M5 11v2.400" /></Svg></TopButton>
        <TopButton $w={36}><Svg w={13}><circle cx="6.500" cy="6.500" r="6" fill="#fff" /><circle cx="4.300" cy="5" r="1" fill="#000" /><circle cx="8.700" cy="5" r="1" fill="#000" /><path d="M3.300 8c1.400 2.600 5 2.600 6.400 0" stroke="#000" strokeWidth="1.100" /></Svg></TopButton>
        <TopButton $w={45}><Svg w={30} h={34} vb="-1 0 28 34"><ellipse cx="14" cy="17" rx="13" ry="14.500" fill="#aaa" /><ellipse cx="14" cy="13.500" rx="5.600" ry="7" fill="#fff" /><path d="M4 26.500c2-5 6-5.500 10-5.500s8 .5 10 5.500c-2.500 3.500-6 5-10 5s-7.500-1.500-10-5z" fill="#fff" /></Svg></TopButton>
      </TopBar>
      <Body>
        <Sidebar>
          <Menu><Svg w={12} h={8} s="#999"><path d="M0 1.500h12M0 4.500h12M0 7.500h12" /></Svg></Menu>
          <SideRow $h={24} $bg="#474747">
            <IconSlot><Svg w={12} h={7} s="#aaa"><path d="M1 6.300 6 1l5 5.300" /></Svg></IconSlot>
            <SideHead $ls={-0.15}>ScrumLogic</SideHead>
            <Svg w={10} h={3} f="#999"><circle cx="1" cy="1.500" r=".8" /><circle cx="5" cy="1.500" r=".8" /><circle cx="9" cy="1.500" r=".8" /></Svg>
          </SideRow>
          <SideRow $h={24} $bg="#000">
            <IconSlot><Svg w={13}><circle cx="6.500" cy="6.500" r="5.500" fill="#ddd" /><circle cx="6.500" cy="5" r="2.500" fill="#fff" stroke="#999" strokeWidth=".6" /><path d="M2.800 10.300c1.500-2.800 6-2.800 7.400 0z" fill="#fff" stroke="#999" strokeWidth=".6" /></Svg></IconSlot>
            <SideText>My Workspace</SideText>
          </SideRow>
          <SideRow $h={24} $bg="#000"><Caption>GROUP WORKSPACES</Caption><Plus /></SideRow>
          <SideRow $h={24} $bg="#212121">
            <IconSlot><Svg w={13} s="#999" sw={0.900}><circle cx="6.500" cy="6.500" r="5" /><circle cx="4" cy="5" r="1.400" /><circle cx="9" cy="5" r="1.400" /><circle cx="6.500" cy="7.500" r="1.400" /><path d="M3 9.500 5 7M10 9.500 8 7" /></Svg></IconSlot>
            <SideText>ScrumLogic</SideText>
          </SideRow>
          <SearchBox $m="7px 8px 0 4px"><Magnifier />Search by name</SearchBox>
          <SideRow $h={24} $mt={7}>
            <IconSlot><Svg w={13} s="#999"><circle cx="6.500" cy="6.500" r="5.300" /><circle cx="6.500" cy="7" r="1.200" /><path d="M7.200 6 9.500 3.500M3 7a3.500 3.500 0 0 1 4-3.600" /></Svg></IconSlot>
            <SideHead $ls={-0.1}>Dashboards</SideHead><Plus />
          </SideRow>
          <SideRow $h={26}><IconSlot /><SideText>Azure SQL Database</SideText></SideRow>
          <SideRow $h={24} $mt={4}>
            <IconSlot><Svg w={13} h={11} f="#999"><path d="M0 8h2v3H0zM2.700 5.500h2V11h-2zM5.400 3h2v8h-2zM8.100 0h2v11h-2zM10.800 3.500h2V11h-2z" /></Svg></IconSlot>
            <SideHead $ls={-0.1}>Reports</SideHead>
          </SideRow>
          {['Report1', 'Report2', 'Report3', 'Report4'].map((r, i) => (
            <SideRow key={r} $h={23.300} $mt={i ? 0 : 2} $bg={i === 3 ? '#3e3e3e' : undefined}><IconSlot /><SideText>{r}</SideText></SideRow>
          ))}
          <SideRow $h={24} $mt={5}>
            <IconSlot><Svg w={13} s="#999"><path d="M2.500 .5h5.500l3 3v9H2.500zM8 .5v3.200h3" /></Svg></IconSlot>
            <SideHead $ls={-0.1}>Datasets</SideHead><Plus />
          </SideRow>
          <SideRow $h={26}><IconSlot /><SideText>TestIoTSASQL</SideText></SideRow>
          <GetData><Svg w={11} s="#111" sw={1.200}><path d="M.8 10.200 10 1M2 .8h8.200V9" /></Svg>Get Data</GetData>
        </Sidebar>
        <Editor>
          <ToolBar>
            <ToolItem $w={51} $gap={7}>File <Chevron /></ToolItem>
            <ToolItem $w={56} $gap={6}>View <Chevron /></ToolItem>
            <ToolItem $w={80}>Reading view</ToolItem>
            <Spacer />
            <ToolItem $w={74}><Svg w={13} s="#555"><path d="M7 2.500h5.500v9h-9V8" /><path d="M.8 7 3.300 1l2.500 6M1.600 5h3.400M0 7h2M4.600 7h2" stroke="#333" /></Svg>Text Box</ToolItem>
            <ToolItem $w={82}><Svg w={13} s="#555"><circle cx="4.500" cy="5" r="3.700" /><path d="M5.500 1.500h6.500v7M8 5l4.300 7H3.700z" /></Svg>Shapes <Chevron /></ToolItem>
            <ToolItem $w={112} $gap={3}><Svg w={11} s="#555"><path d="M10 4V1.500H1v8.500h4M3 4.500h4M3 1.500V10M5.500 4.500h5v5h-5zM7 7h2v3" /></Svg>Visual Interactions</ToolItem>
            <ToolItem $w={67} $gap={3}><Svg w={10} h={11} s="#555"><path d="M3.500 1.600A4.300 4.300 0 1 0 7 1.800M1 1.200h2.700v2.600" /></Svg>Refresh</ToolItem>
            <ToolItem $w={120}><Svg w={13} s="#555"><path d="M3.500 .5h9v10h-9zM3.500 2.500h-3v10h9v-2" /></Svg>Duplicate this page</ToolItem>
            <ToolItem $w={58}><Svg w={11} s="#555"><path d="M.5 .5h10v10H2l-1.500-1.500zM2.500 .5v4h6v-4M3 10.500V7h5v3.500M5 8v2.500" /></Svg>Save</ToolItem>
            <ToolItem $w={81}><Pin />Pin Live Page</ToolItem>
          </ToolBar>
          <Work>
            <CanvasColumn>
              <Page>
                <Visual>
                  <VisualHeader>
                    <Grip />
                    <Pin c="#8c8c8c" w={12} />
                    <Svg w={11} s="#999"><path d="M.5 .5h10v10H.5zM.5 6.500h4v4M5.500 5.500l3.500-3.500M6 2h3v3" /></Svg>
                    <Svg w={12} h={3} f="#777"><rect x="0" y=".7" width="2" height="1.800" /><rect x="5" y=".7" width="2" height="1.800" /><rect x="10" y=".7" width="2" height="1.800" /></Svg>
                  </VisualHeader>
                  {HANDLES.map(([c, k]) => <Handle key={c} $css={c} $corner={k} />)}
                  <VisualTitle>Average of Longitude, Average of Latitude and Average of Min_Pressure by DeviceName and WarningType</VisualTitle>
                  <Legend>{LEGEND.map(([t, c, w]) => <LegendItem key={t} $c={c} $w={w}>{t}</LegendItem>)}</Legend>
                  <MapFrame>
                    <WorldMap />
                    <Badge $x={556} $y={54.500} $w={58}>Azores station</Badge>
                    <Badge $x={242} $y={123} $w={66}>Bermuda station</Badge>
                    <Badge $x={663} $y={175.500} $w={64}>Canaries station</Badge>
                    <Badge $x={225} $y={251.500} $w={75}>Puerto Rico station</Badge>
                    <Badge $x={228} $y={320.500} $w={63}>Grenada station</Badge>
                    <Tooltip>
                      <span>DEVICENAME</span><TipValue>Puerto Rico station</TipValue>
                      <span>WARNINGTYPE</span><TipValue>Cat 1 Hurricane</TipValue>
                      <span>AVERAGE OF<br />MIN_PRESSURE</span><TipValue>966.52</TipValue>
                    </Tooltip>
                  </MapFrame>
                </Visual>
              </Page>
              <PageTabs>
                <TabArrows><Svg w={4} h={7} f="#bbb"><path d="M4 0v7L0 3.500z" /></Svg><Svg w={4} h={7} f="#bbb"><path d="M0 0v7l4-3.500z" /></Svg></TabArrows>
                <PageTab>Page 1</PageTab>
                <AddPage><Svg w={9} s="#776a2c" sw={2.400}><path d="M4.500 0v9M0 4.500h9" /></Svg></AddPage>
              </PageTabs>
            </CanvasColumn>
            <Pane $w={141} $sep>
              <PaneHead $pl={10}>Visualizations<ChevRight /></PaneHead>
              <Gallery>{VIZ.map((v, i) => <Cell key={i} $on={i === 15}><Viz>{v}</Viz></Cell>)}</Gallery>
              <Tabs>
                <Tab $on><Svg w={12} f="#fff"><path d="M0 0h3v12H0zM4.500 6h3v6h-3zM9 3h3v9H9zM0 10.500h12V12H0z" /></Svg></Tab>
                <Tab><Svg w={15} h={14} s="#ddd" sw={1.300}><path d="M13.800.8c-3 1-6 3.600-7.600 6l1.600 1.600c2.600-1.800 5.200-4.600 6-7.600zM6 7.200c-2 0-2.600 1-2.800 2.600S1.800 12 .8 12.600c3 1 6.400 0 6.800-3.600z" /></Svg></Tab>
              </Tabs>
              <Wells>
                {WELLS.map(([label, chip, h, pt, wh]) => (
                  <React.Fragment key={label}>
                    <WellLabel $h={h} $pt={pt}>{label}</WellLabel>
                    <Well $h={wh}><Chip><span>{chip}</span>
                      <Svg w={20} h={8} f="#8a8a8a"><path d="M1 2.500h6L4 5.500z" /><path d="M13.500 1l6 6M19.500 1l-6 6" stroke="#6e6e6e" /></Svg>
                    </Chip></Well>
                  </React.Fragment>
                ))}
                <WellLabel $h={25} $pt={9}>Color saturation</WellLabel>
                <Well $h={21}><Drop $pl={6}>Drag data fields here</Drop></Well>
                <FilterHead>Filters</FilterHead>
                <WellLabel $h={26.500} $pt={8.500}>Visual level filters</WellLabel>
                <Well $h={106}>{FILTERS.map(f => <Chip key={f} $pl={6}><span>{f}</span></Chip>)}</Well>
                <WellLabel $h={28.500} $pt={9.500}>Page level filters</WellLabel>
                <Well $h={19}><Drop $pl={5}>Drag data fields here</Drop></Well>
                <WellLabel $h={28} $pt={9}>Report level filters</WellLabel>
                <Well $h={19}><Drop $pl={5}>Drag data fields here</Drop></Well>
              </Wells>
            </Pane>
            <Pane $w={138}>
              <PaneHead>Fields<ChevRight /></PaneHead>
              <SearchBox $m="5px 7px 0 7px"><Magnifier />Search by name</SearchBox>
              <TableRow>
                <Svg w={5} f="#999"><path d="M5 0v5H0z" /></Svg>
                <Svg w={11} h={10}><rect width="11" height="10" fill="#e6e6e6" /><path d="M0 2.500h11M0 5h11M0 7.500h11M3.700 2v8M7.300 2v8" stroke="#555" strokeWidth=".8" /></Svg>
                WeatherStation...
              </TableRow>
              <FieldList>
                {FIELDS.map(([name, on, kind]) => (
                  <FieldRow key={name}>
                    <DragGrip />
                    <Check $on={on}>{on ? <Svg w={8} s="#222" sw={1.300}><path d="M1 4.200 3.200 6.400 7.200 1.800" /></Svg> : null}</Check>
                    <Kind>{kind === 's' ? 'Σ' : kind === 'c' ? <Svg w={7} h={9}><rect width="7" height="9" fill="#c8c8c8" /><path d="M1 2h5M1 4.500h5M1 6.500h5M2.700 3.500V8M4.500 3.500V8" stroke="#666" strokeWidth=".7" /></Svg> : null}</Kind>
                    {name}
                  </FieldRow>
                ))}
              </FieldList>
            </Pane>
          </Work>
        </Editor>
      </Body>
    </Shell>
  );
}
